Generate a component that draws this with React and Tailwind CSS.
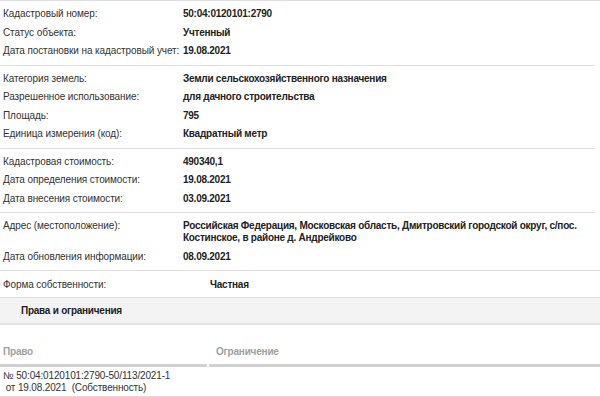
import React from 'react';

const Row = ({ label, value, multi }) => (
  <div className="flex py-[3.25px] leading-[12px]">
    <div className="w-[183px] shrink-0 pl-[3px] whitespace-nowrap tracking-[-0.1px] text-[10px] text-[#333]">{label}</div>
    <div className={`font-bold text-[10px] tracking-[-0.25px] text-[#222] ${multi ? 'w-[412px]' : ''}`}>{value}</div>
  </div>
);

const Section = ({ rows, full }) => (
  <div className={`py-[4px] border-b border-[#dedede] ${full ? 'w-full' : 'w-[595px]'}`}>
    {rows.map((r, i) => (
      <Row key={i} {...r} />
    ))}
  </div>
);

const App = () => {
  return (
    <div className="min-h-screen bg-white text-[10px] font-['Liberation_Sans',Arial,sans-serif] w-[600px] overflow-hidden">
      <div className="border-t border-[#dedede]" />
      <Section
        rows={[
          { label: 'Кадастровый номер:', value: '50:04:0120101:2790' },
          { label: 'Статус объекта:', value: 'Учтенный' },
          { label: 'Дата постановки на кадастровый учет:', value: '19.08.2021' },
        ]}
      />
      <Section
        rows={[
          { label: 'Категория земель:', value: 'Земли сельскохозяйственного назначения' },
          { label: 'Разрешенное использование:', value: 'для дачного строительства' },
          { label: 'Площадь:', value: '795' },
          { label: 'Единица измерения (код):', value: 'Квадратный метр' },
        ]}
      />
      <Section
        rows={[
          { label: 'Кадастровая стоимость:', value: '490340,1' },
          { label: 'Дата определения стоимости:', value: '19.08.2021' },
          { label: 'Дата внесения стоимости:', value: '03.09.2021' },
        ]}
      />
      <Section
        full
        rows={[
          {
            label: 'Адрес (местоположение):',
            value: 'Российская Федерация, Московская область, Дмитровский городской округ, с/пос. Костинское, в районе д. Андрейково',
            multi: true,
          },
          { label: 'Дата обновления информации:', value: '08.09.2021' },
        ]}
      />
      <div className="flex items-center h-[27px] border-b border-[#dedede]">
        <div className="w-[210px] shrink-0 pl-[3px] tracking-[-0.1px] text-[#333]">Форма собственности:</div>
        <div className="font-bold text-[10px] tracking-[-0.25px] text-[#222]">Частная</div>
      </div>
      <div className="flex items-center h-[27px] bg-[#f3f3f3] border-b-2 border-[#e4e4e4] pl-[21px] font-bold text-[10px] tracking-[-0.25px] text-[#222]">
        Права и ограничения
      </div>
      <div className="flex items-end h-[42px] font-bold text-[10px] tracking-[-0.2px] text-[#a0a0a0]">
        <div className="w-[207px] pl-[3px] pb-[5px] border-b-[3px] border-[#d2d2d2] mr-[2px]">Право</div>
        <div className="flex-1 pl-[7px] pb-[5px] border-b-[3px] border-[#d2d2d2]">Ограничение</div>
      </div>
      <div className="flex border-b border-[#dedede] pt-[3px] pb-[2px] leading-[12px] text-[10px] tracking-[-0.15px] text-[#333]">
        <div className="w-[209px] pl-[3px]">
          <div>№ 50:04:0120101:2790-50/113/2021-1</div>
          <div className="whitespace-pre"> от 19.08.2021  (Собственность)</div>
        </div>
        <div className="flex-1" />
      </div>
    </div>
  );
};

export default App;
